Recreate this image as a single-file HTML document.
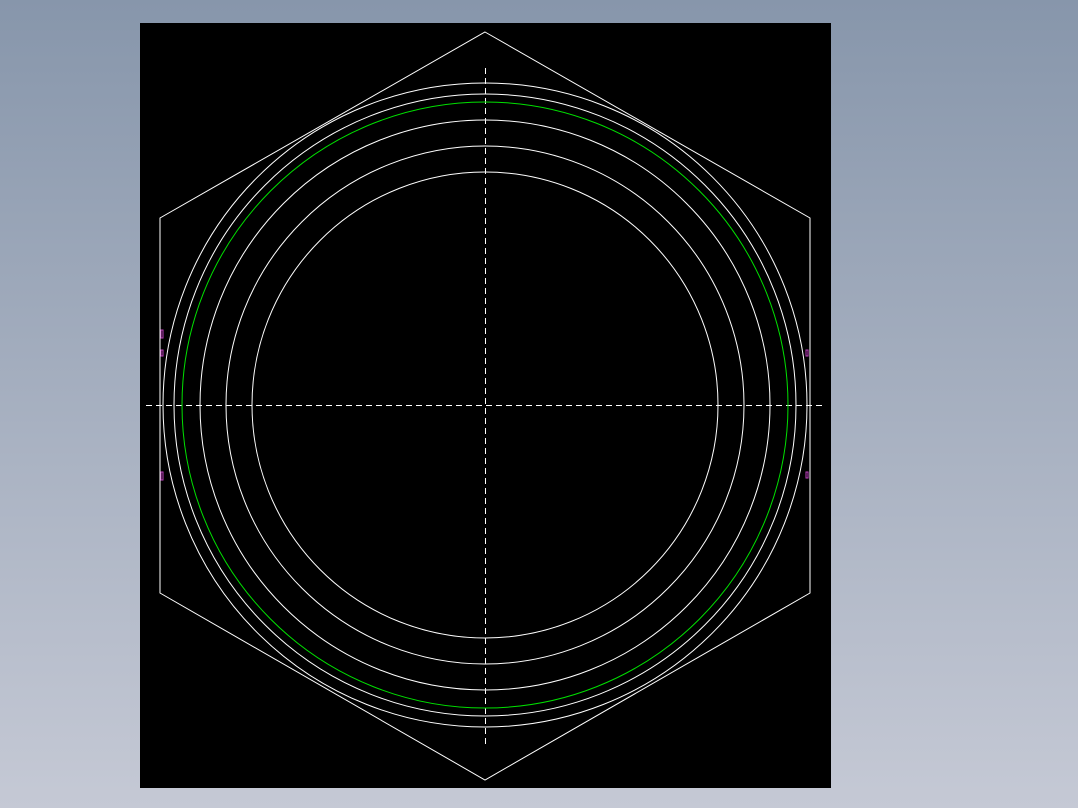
<!DOCTYPE html>
<html><head><style>
html,body{margin:0;padding:0;width:1078px;height:808px;overflow:hidden;background:linear-gradient(#8796ab,#c5c9d5);}
svg{position:absolute;left:0;top:0}
</style></head><body>
<svg width="1078" height="808" viewBox="0 0 1078 808">
<rect x="140" y="23" width="691" height="765" fill="#000"/>
<g fill="none" stroke="#fff" stroke-width="1">
<polygon points="485,32 810,218 810,593 485,780 160,593 160,218"/>
<circle cx="485" cy="405" r="322"/>
<circle cx="485" cy="405" r="311"/>
<circle cx="485" cy="405" r="285"/>
<circle cx="485" cy="405" r="259"/>
<circle cx="485" cy="405" r="233"/>
<line x1="146" y1="405.5" x2="826" y2="405.5" stroke-dasharray="6,4"/>
<line x1="485.5" y1="68" x2="485.5" y2="745" stroke-dasharray="6,4"/>
</g>
<circle cx="485" cy="405" r="303" fill="none" stroke="#00e000" stroke-width="1"/>
<g stroke="#c040c0" fill="none" stroke-width="1">
<rect x="161" y="330" width="2" height="8"/>
<rect x="161" y="350" width="2" height="6"/>
<rect x="161" y="472" width="2" height="8"/>
<rect x="806" y="350" width="2" height="6"/>
<rect x="806" y="472" width="2" height="6"/>
</g>
</svg>
</body></html>
